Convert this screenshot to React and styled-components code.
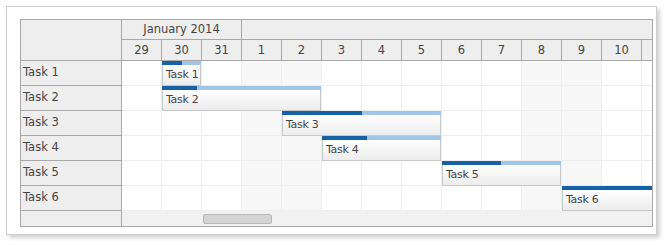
import styled, { createGlobalStyle } from "styled-components";

const GlobalStyle = createGlobalStyle`
  body {
    margin: 0;
    background: #fff;
    font-family: "DejaVu Sans", Tahoma, sans-serif;
  }
`;

const days = [29, 30, 31, 1, 2, 3, 4, 5, 6, 7, 8, 9, 10, ""];
const shaded = [3, 4, 10, 11];

const tasks = [
  { name: "Task 1", start: 1, length: 1, done: 50 },
  { name: "Task 2", start: 1, length: 4, done: 22 },
  { name: "Task 3", start: 4, length: 4, done: 50 },
  { name: "Task 4", start: 5, length: 3, done: 38 },
  { name: "Task 5", start: 8, length: 3, done: 50 },
  { name: "Task 6", start: 11, length: 4, done: 100 },
];

const Panel = styled.div`
  margin: 6px;
  width: 651px;
  height: 229px;
  box-sizing: border-box;
  border: 1px solid #cfcfcf;
  box-shadow: 3px 3px 4px rgba(0, 0, 0, 0.18);
  padding: 12px 3px 0 13px;
  background: #fff;
`;

const Gantt = styled.div`
  display: flex;
  width: 633px;
  height: 208px;
  box-sizing: border-box;
  border: 1px solid #a8a8a8;
  font-size: 11.5px;
  color: #444;
`;

const Labels = styled.div`
  width: 100px;
  flex: none;
  display: flex;
  flex-direction: column;
  background: #eee;
  border-right: 1px solid #a8a8a8;
`;

const Corner = styled.div`
  height: 40px;
  border-bottom: 1px solid #a8a8a8;
`;

const Label = styled.div`
  height: 24px;
  line-height: 22px;
  padding-left: 2px;
  border-bottom: 1px solid #a8a8a8;
`;

const Timeline = styled.div`
  flex: 1;
  overflow: hidden;
  display: flex;
  flex-direction: column;
`;

const HeaderRow = styled.div`
  display: flex;
  height: ${(p) => p.$height}px;
  background: #eee;
  border-bottom: 1px solid #a8a8a8;
  flex: none;
`;

const HeaderCell = styled.div`
  width: ${(p) => p.$width - 1}px;
  flex: none;
  border-right: 1px solid #a8a8a8;
  text-align: center;
  line-height: ${(p) => p.$line}px;
`;

const Row = styled.div`
  position: relative;
  display: flex;
  height: 24px;
  border-bottom: 1px solid #eee;
  flex: none;
`;

const Cell = styled.div`
  width: 39px;
  flex: none;
  border-right: 1px solid #eee;
  background: ${(p) => (p.$shaded ? "#f7f7f7" : "#fff")};
`;

const Bar = styled.div`
  position: absolute;
  top: 0;
  left: ${(p) => p.$start * 40}px;
  width: ${(p) => p.$length * 40 - 1}px;
  height: 25px;
  display: flex;
  flex-direction: column;
`;

const Progress = styled.div`
  height: 4px;
  flex: none;
  background: linear-gradient(
    to right,
    #1563a6 0,
    #1563a6 ${(p) => p.$done}%,
    #9fc6e7 ${(p) => p.$done}%,
    #9fc6e7 100%
  );
`;

const Box = styled.div`
  flex: 1;
  box-sizing: border-box;
  border: 1px solid #c8c8c8;
  border-top: none;
  background: linear-gradient(#fff, #ececec);
  padding-left: 3px;
  font-size: 11px;
  letter-spacing: -0.3px;
  line-height: 19px;
  color: #444;
  white-space: nowrap;
`;

const Scroller = styled.div`
  flex: 1;
  background: #f1f1f1;
  padding: 3px 0 0 81px;
`;

const Thumb = styled.div`
  width: 67px;
  height: 8px;
  border: 1px solid #b8b8b8;
  border-radius: 2px;
  background: #d4d4d4;
`;

const App = () => {
  return (
    <>
      <GlobalStyle />
      <Panel>
        <Gantt>
          <Labels>
            <Corner />
            {tasks.map((t) => (
              <Label key={t.name}>{t.name}</Label>
            ))}
          </Labels>
          <Timeline>
            <HeaderRow $height={19}>
              <HeaderCell $width={120} $line={18}>
                January 2014
              </HeaderCell>
              <HeaderCell $width={440} $line={18} />
            </HeaderRow>
            <HeaderRow $height={20}>
              {days.map((d, i) => (
                <HeaderCell key={i} $width={40} $line={20}>
                  {d}
                </HeaderCell>
              ))}
            </HeaderRow>
            {tasks.map((t) => (
              <Row key={t.name}>
                {days.map((d, i) => (
                  <Cell key={i} $shaded={shaded.includes(i)} />
                ))}
                <Bar $start={t.start} $length={t.length}>
                  <Progress $done={t.done} />
                  <Box>{t.name}</Box>
                </Bar>
              </Row>
            ))}
            <Scroller>
              <Thumb />
            </Scroller>
          </Timeline>
        </Gantt>
      </Panel>
    </>
  );
};

export default App;
